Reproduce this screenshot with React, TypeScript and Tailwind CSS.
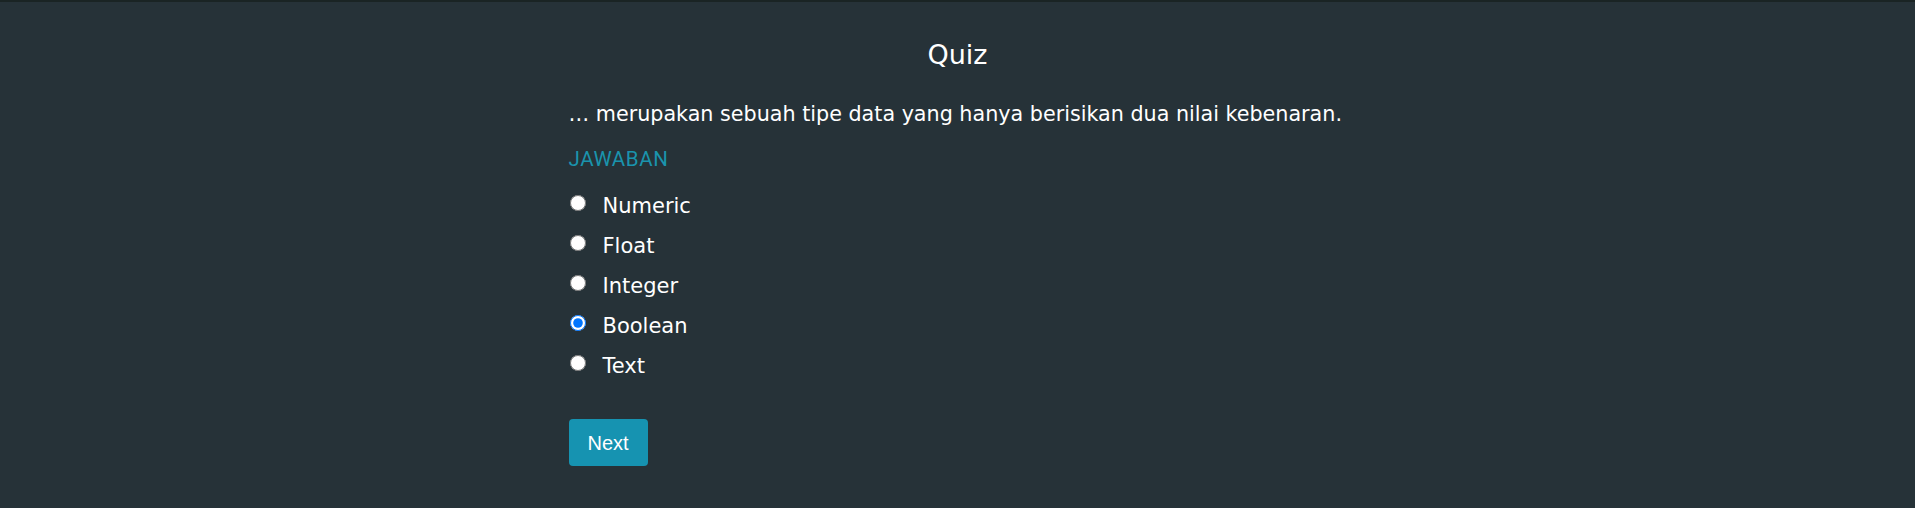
import React from "react";

const options = ["Numeric", "Float", "Integer", "Boolean", "Text"];

export default function App() {
  return (
    <div className="min-h-screen w-full bg-[#263238] border-t-2 border-[#1a2424] text-white" style={{ fontFamily: '"DejaVu Sans", sans-serif' }}>
      <div className="w-[778px] mx-auto flex flex-col pt-[33px]">
        <h3 className="text-center text-[27px] leading-[40px] font-medium">Quiz</h3>
        <p className="mt-[24px] text-[20.7px] leading-[30px]">… merupakan sebuah tipe data yang hanya berisikan dua nilai kebenaran.</p>
        <div className="mt-[18px] text-[20.5px] leading-[24px] tracking-[0.6px] text-[#1a94ad]" style={{ fontFamily: 'Roboto, sans-serif' }}>JAWABAN</div>
        <div className="mt-[12px] flex flex-col">
          {options.map((o) => (
            <label key={o} className="h-10 flex items-center">
              <input type="radio" name="q" defaultChecked={o === "Boolean"} className="w-4 h-4 ml-[1px] m-0" />
              <span className="ml-[17px] mt-[6px] text-[21px] leading-[30px]">{o}</span>
            </label>
          ))}
        </div>
        <div className="mt-[36px]">
          <button className="h-[47px] px-[19px] rounded-[4px] bg-[#1693b1] text-white text-[20px]" style={{ fontFamily: '"Liberation Sans", Arial, sans-serif' }}>Next</button>
        </div>
      </div>
    </div>
  );
}
